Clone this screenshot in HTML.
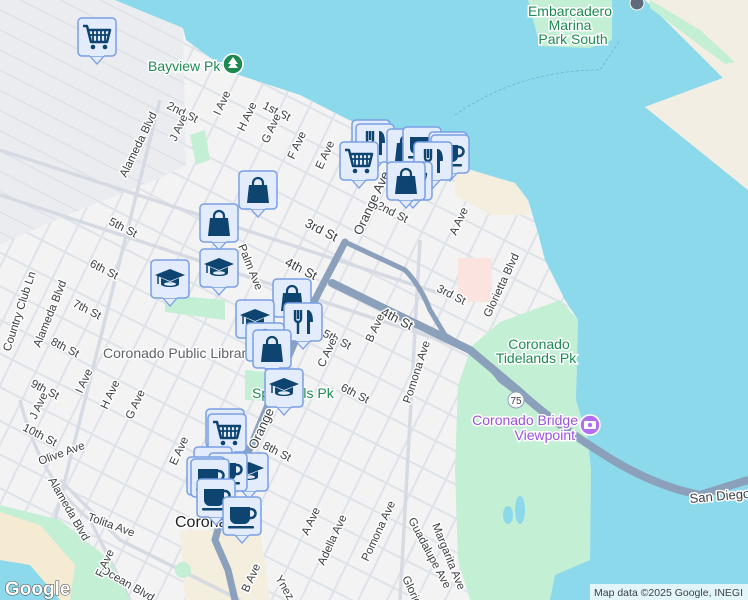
<!DOCTYPE html>
<html><head><meta charset="utf-8"><style>
html,body{margin:0;padding:0;width:748px;height:600px;overflow:hidden;background:#f4f3f4}
svg{display:block}
text{font-family:"Liberation Sans",sans-serif}
.s{font-size:11.5px;fill:#3c4043;paint-order:stroke;stroke:#fff;stroke-width:3px;stroke-linejoin:round}
.g{font-size:14px;fill:#1e8a52;paint-order:stroke;stroke:#fff;stroke-width:3px}
</style></head><body>
<svg width="748" height="600" viewBox="0 0 748 600" xmlns="http://www.w3.org/2000/svg">
<defs>
<pattern id="st" width="30" height="30" patternUnits="userSpaceOnUse" patternTransform="rotate(27)"><rect width="30" height="2" y="14" fill="#dee2e9"/></pattern>
<pattern id="av" width="26" height="26" patternUnits="userSpaceOnUse" patternTransform="rotate(-64)"><rect width="26" height="2" y="12" fill="#dee2e9"/></pattern>
<pattern id="ind" width="18" height="18" patternUnits="userSpaceOnUse" patternTransform="rotate(27)"><rect width="18" height="1.2" y="8" fill="#dbdfe6"/></pattern>
<symbol id="pin" viewBox="0 0 40 48"><polygon points="12,38 20,47 28,38" fill="#e3ecfc" stroke="#7a9fe4" stroke-width="1.3"/><rect x="1" y="1" width="38" height="38" rx="4" fill="#e3ecfc" stroke="#7a9fe4" stroke-width="1.5"/><rect x="13" y="36" width="14" height="3" fill="#e3ecfc"/></symbol>
<symbol id="cart" viewBox="0 0 40 48"><use href="#pin"/><path d="M6 9h4l4 16h16l3-12H11" fill="none" stroke="#0d4470" stroke-width="2.5" stroke-linejoin="round"/><path d="M16 13v11M20 13v11M24 13v11M28 13v11M12 18h19" stroke="#0d4470" stroke-width="1.8"/><circle cx="16" cy="30" r="2.3" fill="#0d4470"/><circle cx="28" cy="30" r="2.3" fill="#0d4470"/></symbol>
<symbol id="bag" viewBox="0 0 40 48"><use href="#pin"/><path d="M11 15h18l2 18H9z" fill="#0d4470"/><path d="M15 16v-3a5 5 0 0 1 10 0v3" fill="none" stroke="#0d4470" stroke-width="2.2"/></symbol>
<symbol id="fork" viewBox="0 0 40 48"><use href="#pin"/><path d="M12 8v9a3 3 0 0 0 3 3v12M18 8v9a3 3 0 0 1-3 3M15 8v9" fill="none" stroke="#0d4470" stroke-width="2.4"/><path d="M25 8c4 1 5 6 5 12h-3v12h-3V8z" fill="#0d4470"/></symbol>
<symbol id="grad" viewBox="0 0 40 48"><use href="#pin"/><polygon points="5,16 20,10 35,16 20,22" fill="#0d4470"/><path d="M11 19v6c0 4 18 4 18 0v-6l-9 4z" fill="#0d4470"/><ellipse cx="20" cy="25" rx="6" ry="1.8" fill="#e3ecfc"/><path d="M8 17v8" stroke="#0d4470" stroke-width="1.5"/></symbol>
<symbol id="cup" viewBox="0 0 40 48"><use href="#pin"/><path d="M8 11h20v11a6 6 0 0 1-6 6h-8a6 6 0 0 1-6-6z" fill="#0d4470"/><path d="M27 13h2a4 4 0 0 1 0 9h-2" fill="none" stroke="#0d4470" stroke-width="2.5"/><rect x="6" y="30" width="26" height="2.5" rx="1" fill="#0d4470"/></symbol>
</defs>
<rect width="748" height="600" fill="#f4f3f4"/>
<rect width="748" height="600" fill="url(#st)"/>
<rect width="748" height="600" fill="url(#av)"/>
<polygon points="0,0 115,0 183,28 186,165 160,178 60,218 0,245" fill="#ebecef"/>
<polygon points="0,0 115,0 183,28 186,165 160,178 60,218 0,245" fill="url(#ind)"/>
<polygon points="455,160 515,183 528,200 530,215 490,215 455,195" fill="#f4eedf"/>
<polygon points="180,530 260,530 270,600 185,600" fill="#f4eedf"/>
<polygon points="458,258 492,258 492,302 458,302" fill="#fbe4df"/>
<g stroke="#d6dbe3" stroke-width="3.5" fill="none">
<path d="M0 195 L470 350"/><path d="M0 150 L460 300"/>
<path d="M160 100 L35 600"/><path d="M60 480 L120 540 L240 600"/>
<path d="M20 400 Q40 480 90 520 L130 600"/><path d="M420 240 L400 600"/>
</g>
<polygon points="472,346 500,322 560,300 578,320 576,400 588,440 591,470 590,560 555,575 550,600 470,600 458,560 455,470 458,385" fill="#c3efd4"/>
<ellipse cx="508" cy="515" rx="5" ry="9" fill="#8dd9ec"/><ellipse cx="520" cy="510" rx="5" ry="14" fill="#8dd9ec"/>
<polygon points="245,370 300,375 305,402 245,400" fill="#c3efd4"/>
<polygon points="190,135 205,130 210,160 196,165" fill="#c3efd4"/>
<polygon points="165,295 225,300 225,320 165,312" fill="#c3efd4"/>
<polygon points="0,505 60,520 110,560 130,600 0,600" fill="#c3efd4"/>
<polygon points="0,512 40,525 75,565 70,600 0,600" fill="#f5ebd3"/>
<polygon points="0,560 30,565 60,600 0,600" fill="#8dd9ec"/>
<circle cx="183" cy="570" r="8" fill="#c3efd4"/>
<polygon points="115,0 183,28 186,40 230,72 300,95 345,118 360,125 455,160 471,170 515,183 528,200 538,233 545,260 565,300 578,320 576,400 588,440 591,470 590,560 555,575 550,600 748,600 748,190 645,107 723,78 645,0" fill="#8dd9ec"/>
<polygon points="645,0 748,0 748,190 645,107 723,78" fill="#f3eee3"/>
<polygon points="650,0 700,30 735,62 725,64 650,8" fill="#c3efd4"/>
<path d="M528 0 L612 0 L612 40 L590 48 L540 46 Z" fill="#c3efd4"/>
<path d="M455 115 Q520 70 600 70 L620 40" fill="none" stroke="#5fb6d8" stroke-width="0.8" stroke-dasharray="3 2"/>
<g stroke="#8aa0bb" fill="none" stroke-linejoin="round" stroke-linecap="round">
<path d="M345 242 L320 290 L300 330 L270 400 L245 460 L222 515 L215 540 L228 570 L235 600" stroke-width="7"/>
<path d="M345 242 L405 270 Q420 285 430 310 L445 335 L470 350" stroke-width="5"/>
<path d="M332 283 L470 350 L520 392 Q550 420 600 452 Q650 485 700 495 L748 480" stroke-width="8"/>
<path d="M460 345 Q490 365 500 380 L520 395" stroke-width="5"/>
</g>
<g class="s">
<text transform="translate(262,108) rotate(27)">1st St</text>
<text transform="translate(166,108) rotate(27)">2nd St</text>
<text transform="translate(376,208) rotate(27)">2nd St</text>
<text transform="translate(304,226) rotate(27)" font-size="13">3rd St</text>
<text transform="translate(284,265) rotate(27)" font-size="13">4th St</text>
<text transform="translate(436,291) rotate(27)">3rd St</text>
<text transform="translate(380,315) rotate(27)" font-size="13">4th St</text>
<text transform="translate(108,224) rotate(27)">5th St</text>
<text transform="translate(89,266) rotate(27)">6th St</text>
<text transform="translate(72,306) rotate(27)">7th St</text>
<text transform="translate(50,344) rotate(27)">8th St</text>
<text transform="translate(30,386) rotate(27)">9th St</text>
<text transform="translate(22,430) rotate(27)">10th St</text>
<text transform="translate(322,336) rotate(27)">5th St</text>
<text transform="translate(340,390) rotate(27)">6th St</text>
<text transform="translate(262,448) rotate(27)">8th St</text>
<text transform="translate(40,465) rotate(-20)">Olive Ave</text>
<text transform="translate(87,520) rotate(20)">Tolita Ave</text>
<text transform="translate(100,572) rotate(30)">Ocean Blvd</text>
<text transform="translate(126,178) rotate(-64)">Alameda Blvd</text>
<text transform="translate(40,348) rotate(-68)">Alameda Blvd</text>
<text transform="translate(48,480) rotate(60)">Alameda Blvd</text>
<text transform="translate(10,352) rotate(-72)">Country Club Ln</text>
<text transform="translate(176,142) rotate(-65)">J Ave</text>
<text transform="translate(220,116) rotate(-65)">I Ave</text>
<text transform="translate(244,132) rotate(-65)">H Ave</text>
<text transform="translate(268,144) rotate(-65)">G Ave</text>
<text transform="translate(294,160) rotate(-65)">F Ave</text>
<text transform="translate(322,170) rotate(-65)">E Ave</text>
<text transform="translate(361,236) rotate(-65)" font-size="13">Orange Ave</text>
<text transform="translate(256,450) rotate(-65)" font-size="13">Orange Ave</text>
<text transform="translate(456,236) rotate(-65)">A Ave</text>
<text transform="translate(238,246) rotate(68)">Palm Ave</text>
<text transform="translate(324,368) rotate(-65)">C Ave</text>
<text transform="translate(372,343) rotate(-65)">B Ave</text>
<text transform="translate(410,404) rotate(-72)">Pomona Ave</text>
<text transform="translate(490,318) rotate(-65)">Glorietta Blvd</text>
<text transform="translate(36,420) rotate(-65)">J Ave</text>
<text transform="translate(82,394) rotate(-65)">I Ave</text>
<text transform="translate(107,410) rotate(-65)">H Ave</text>
<text transform="translate(132,420) rotate(-65)">G Ave</text>
<text transform="translate(176,466) rotate(-65)">E Ave</text>
<text transform="translate(102,578) rotate(-65)">F Ave</text>
<text transform="translate(308,536) rotate(-65)">A Ave</text>
<text transform="translate(324,566) rotate(-65)">Adella Ave</text>
<text transform="translate(368,562) rotate(-65)">Pomona Ave</text>
<text transform="translate(432,525) rotate(68)">Margarita Ave</text>
<text transform="translate(408,520) rotate(62)">Guadalupe Ave</text>
<text transform="translate(402,578) rotate(65)">Glorieta</text>
<text transform="translate(248,593) rotate(-65)">B Ave</text>
<text transform="translate(275,578) rotate(60)">Ynez</text>
<text transform="translate(690,503) rotate(-5)" font-size="13">San Diego</text>
<text x="103" y="358" font-size="14" fill="#5f6368">Coronado Public Library</text>
<text x="175" y="527" font-size="16" fill="#202124">Coronado</text>
</g>
<text class="g" x="148" y="71">Bayview Pk</text>
<circle cx="233" cy="64" r="10" fill="#1e8a52" stroke="#fff" stroke-width="1.5"/><path d="M233 57l-5 7h3l-3 4h10l-3-4h3z" fill="#fff"/>
<g class="g" text-anchor="middle" font-size="13"><text x="570" y="16">Embarcadero</text><text x="570" y="30">Marina</text><text x="573" y="44">Park South</text>
<text x="539" y="349">Coronado</text><text x="536" y="363">Tidelands Pk</text></g>
<text class="g" x="252" y="398">Spreckels Pk</text>
<g class="g" style="fill:#9b51e0" font-size="13" text-anchor="end"><text x="578" y="425">Coronado Bridge</text><text x="575" y="440">Viewpoint</text></g>
<circle cx="590" cy="425" r="10" fill="#b06ef0" stroke="#fff" stroke-width="1.5"/><rect x="584" y="421" width="12" height="8" rx="1" fill="#fff"/><circle cx="590" cy="425" r="2.2" fill="#b06ef0"/>
<circle cx="637" cy="3" r="7" fill="#5f6b7a" stroke="#fff"/>
<circle cx="516" cy="400" r="8" fill="#fff" stroke="#8aa0bb"/>
<text x="516" y="404" font-size="10" text-anchor="middle" fill="#3c4043">75</text>
<use href="#cart" x="77" y="17" width="40" height="48"/>
<use href="#fork" x="351" y="119" width="40" height="48"/>
<use href="#fork" x="355" y="123" width="40" height="48"/>
<use href="#cart" x="339" y="141" width="40" height="48"/>
<use href="#bag" x="386" y="128" width="40" height="48"/>
<use href="#cup" x="402" y="126" width="40" height="48"/>
<use href="#cup" x="428" y="131" width="40" height="48"/>
<use href="#cup" x="430" y="134" width="40" height="48"/>
<use href="#fork" x="413" y="141" width="40" height="48"/>
<use href="#cart" x="393" y="161" width="40" height="48"/>
<use href="#bag" x="386" y="161" width="40" height="48"/>
<use href="#bag" x="238" y="170" width="40" height="48"/>
<use href="#bag" x="199" y="203" width="40" height="48"/>
<use href="#grad" x="199" y="248" width="40" height="48"/>
<use href="#grad" x="150" y="259" width="40" height="48"/>
<use href="#bag" x="272" y="278" width="40" height="48"/>
<use href="#grad" x="235" y="299" width="40" height="48"/>
<use href="#fork" x="283" y="302" width="40" height="48"/>
<use href="#bag" x="245" y="322" width="40" height="48"/>
<use href="#bag" x="252" y="329" width="40" height="48"/>
<use href="#grad" x="264" y="368" width="40" height="48"/>
<use href="#cart" x="205" y="408" width="40" height="48"/>
<use href="#cart" x="207" y="413" width="40" height="48"/>
<use href="#grad" x="229" y="452" width="40" height="48"/>
<use href="#cup" x="193" y="446" width="40" height="48"/>
<use href="#cup" x="208" y="452" width="40" height="48"/>
<use href="#cup" x="186" y="456" width="40" height="48"/>
<use href="#cup" x="190" y="458" width="40" height="48"/>
<use href="#cup" x="196" y="478" width="40" height="48"/>
<use href="#cup" x="222" y="496" width="40" height="48"/>
<text x="5" y="595" font-size="19" font-weight="bold" fill="#fff" stroke="#3c4043" stroke-width="1" style="paint-order:stroke">Google</text>
<rect x="590" y="584" width="158" height="16" fill="#fff" fill-opacity="0.75"/>
<text x="594" y="596" font-size="10.5" fill="#3c4043">Map data ©2025 Google, INEGI</text>
</svg>
</body></html>
